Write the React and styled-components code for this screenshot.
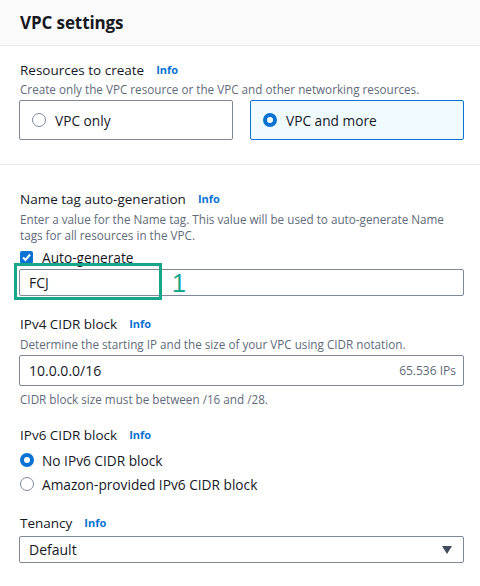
import styled, { createGlobalStyle } from "styled-components";

const GlobalStyle = createGlobalStyle`
  html, body {
    margin: 0;
    padding: 0;
    background: #ffffff;
  }
  body {
    font-family: "Open Sans", "Noto Sans", "Liberation Sans", sans-serif;
    color: #16191f;
  }
`;

const Page = styled.div`
  width: 480px;
  height: 586px;
  overflow: hidden;
  background: #ffffff;
`;

const Header = styled.div`
  height: 46px;
  box-sizing: border-box;
  padding: 0 20px;
  display: flex;
  align-items: center;
  background: #fafafa;
  border-bottom: 1px solid #eaeded;
  h2 {
    margin: 0;
    font-size: 17px;
    font-weight: 700;
    color: #16191f;
    letter-spacing: -0.1px;
  }
`;

const Section = styled.div`
  padding: ${(p) => p.$pad || "14px 16px 24px 19px"};
  border-bottom: ${(p) => (p.$divider ? "1px solid #e9ebed" : "none")};
`;

const Field = styled.div`
  display: flex;
  flex-direction: column;
  margin-bottom: ${(p) => p.$mb || "0"};
`;

const Label = styled.div`
  display: flex;
  align-items: center;
  gap: 12px;
  font-size: 13.5px;
  line-height: 20px;
  color: #16191f;
  padding-left: 1px;
`;

const Info = styled.span`
  font-size: 11px;
  font-weight: 700;
  color: #0972d3;
`;

const Desc = styled.div`
  font-size: 11.7px;
  line-height: 16px;
  margin-top: ${(p) => p.$mt || "2px"};
  color: #5f6b7a;
  padding-left: 1px;
`;

const Tiles = styled.div`
  display: grid;
  grid-template-columns: 1fr 1fr;
  gap: 17px;
  margin-top: 3px;
`;

const Tile = styled.div`
  height: 40px;
  box-sizing: border-box;
  display: flex;
  align-items: center;
  gap: 9px;
  padding-left: 12px;
  border: 1px solid ${(p) => (p.$active ? "#0972d3" : "#7d8998")};
  background: ${(p) => (p.$active ? "#f0fbff" : "#ffffff")};
  border-radius: 2px;
  font-size: 13.7px;
  color: #16191f;
`;

const Radio = styled.span`
  width: 14px;
  height: 14px;
  box-sizing: border-box;
  border-radius: 50%;
  flex-shrink: 0;
  border: ${(p) => (p.$checked ? "4px solid #0972d3" : "1.5px solid #7d8998")};
  background: #ffffff;
`;

const RadioRow = styled.div`
  display: flex;
  align-items: center;
  gap: 8px;
  height: 24px;
  font-size: 13.7px;
  color: #16191f;
  padding-left: 1px;
`;

const CheckRow = styled.div`
  display: flex;
  align-items: center;
  gap: 9px;
  height: 18px;
  margin-top: 5px;
  font-size: 13.7px;
  color: #16191f;
`;

const CheckBox = styled.span`
  width: 13px;
  height: 13px;
  border-radius: 2px;
  background: #0972d3;
  display: flex;
  align-items: center;
  justify-content: center;
  margin-left: 1px;
`;

const InputWrap = styled.div`
  position: relative;
  margin-top: ${(p) => p.$mt || "3px"};
`;

const Input = styled.div`
  height: ${(p) => p.$h || "27px"};
  box-sizing: border-box;
  border: 1px solid #7d8998;
  border-radius: 2px;
  display: flex;
  align-items: center;
  justify-content: space-between;
  padding: 0 7px 0 9px;
  font-size: 14px;
  color: #16191f;
  width: 445px;
`;

const Suffix = styled.span`
  font-size: 12px;
  color: #5f6b7a;
`;

const Highlight = styled.div`
  position: absolute;
  left: -5px;
  top: -6px;
  width: 148px;
  height: 37px;
  box-sizing: border-box;
  border: 3px solid #17a689;
`;

const Marker = styled.span`
  position: absolute;
  left: 153px;
  top: -1px;
  font-size: 25px;
  line-height: 30px;
  color: #17a689;
  font-family: "Liberation Sans", sans-serif;
`;

const Caret = styled.span`
  width: 0;
  height: 0;
  border-left: 5.5px solid transparent;
  border-right: 5.5px solid transparent;
  border-top: 8px solid #414d5c;
  margin-right: 4px;
`;

const Hint = styled.div`
  font-size: 11.7px;
  line-height: 16px;
  color: #5f6b7a;
  margin-top: 5px;
  padding-left: 1px;
`;

const Spacer = styled.div`
  height: ${(p) => p.$h}px;
`;

export default function App() {
  return (
    <Page>
      <GlobalStyle />
      <Header>
        <h2>VPC settings</h2>
      </Header>

      <Section $divider>
        <Label>
          Resources to create <Info>Info</Info>
        </Label>
        <Desc $mt="1px">Create only the VPC resource or the VPC and other networking resources.</Desc>
        <Tiles>
          <Tile>
            <Radio />
            VPC only
          </Tile>
          <Tile $active>
            <Radio $checked />
            VPC and more
          </Tile>
        </Tiles>
      </Section>

      <Section $pad="24px 16px 0 19px">
        <Field $mb="18px">
          <Label>
            Name tag auto-generation <Info>Info</Info>
          </Label>
          <Desc>
            Enter a value for the Name tag. This value will be used to auto-generate Name
            <br />
            tags for all resources in the VPC.
          </Desc>
          <CheckRow>
            <CheckBox>
              <svg width="11" height="11" viewBox="0 0 11 11">
                <path d="M2 5.5 L4.5 8 L9 2.5" fill="none" stroke="#fff" strokeWidth="2" />
              </svg>
            </CheckBox>
            Auto-generate
          </CheckRow>
          <InputWrap $mt="3px">
            <Input>FCJ</Input>
            <Highlight />
            <Marker>1</Marker>
          </InputWrap>
        </Field>

        <Field $mb="18px">
          <Label>
            IPv4 CIDR block <Info>Info</Info>
          </Label>
          <Desc>Determine the starting IP and the size of your VPC using CIDR notation.</Desc>
          <InputWrap $mt="3px">
            <Input $h="31px">
              10.0.0.0/16
              <Suffix>65.536 IPs</Suffix>
            </Input>
          </InputWrap>
          <Hint>CIDR block size must be between /16 and /28.</Hint>
        </Field>

        <Field $mb="17px">
          <Label>
            IPv6 CIDR block <Info>Info</Info>
          </Label>
          <Spacer $h={3} />
          <RadioRow>
            <Radio $checked />
            No IPv6 CIDR block
          </RadioRow>
          <RadioRow>
            <Radio />
            Amazon-provided IPv6 CIDR block
          </RadioRow>
        </Field>

        <Field>
          <Label>
            Tenancy <Info>Info</Info>
          </Label>
          <InputWrap $mt="3px">
            <Input>
              Default
              <Caret />
            </Input>
          </InputWrap>
        </Field>
      </Section>
    </Page>
  );
}
